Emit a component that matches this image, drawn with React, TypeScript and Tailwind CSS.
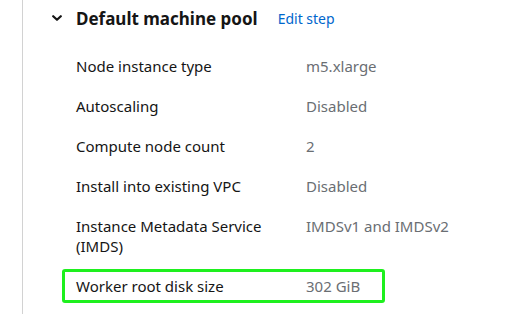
import React from 'react';

const rows: { label: string; value: string; highlight?: boolean }[] = [
  { label: 'Node instance type', value: 'm5.xlarge' },
  { label: 'Autoscaling', value: 'Disabled' },
  { label: 'Compute node count', value: '2' },
  { label: 'Install into existing VPC', value: 'Disabled' },
  { label: 'Instance Metadata Service (IMDS)', value: 'IMDSv1 and IMDSv2' },
  { label: 'Worker root disk size', value: '302 GiB', highlight: true },
];

const Chevron = () => (
  <svg width="10" height="7" viewBox="0 0 10 7" className="text-[#151515]">
    <path d="M1.2 1.2 L5 4.8 L8.8 1.2" fill="none" stroke="currentColor" strokeWidth="2.2" strokeLinecap="round" strokeLinejoin="round" />
  </svg>
);

export default function App() {
  return (
    <div className="w-[505px] h-[314px] overflow-hidden bg-white font-['Noto_Sans',sans-serif]">
      <div className="ml-[22px] h-full border-l border-[#d2d2d2] pl-[26px] pt-[8px]">
        {/* Section header */}
        <div className="flex items-center h-[21px]">
          <div className="w-[27px] pl-[3px] flex items-center">
            <Chevron />
          </div>
          <h3 className="text-[17px] font-bold leading-[21px] text-[#151515]">Default machine pool</h3>
          <a href="#" className="ml-[20px] text-[14px] leading-[21px] text-[#0066cc]">Edit step</a>
        </div>

        {/* Description list */}
        <dl className="mt-[27px] pl-[27px] flex flex-col gap-[20px] text-[15px] leading-[20px]">
          {rows.map((r) =>
            r.highlight ? (
              <div
                key={r.label}
                className="-mx-[14px] -my-[7px] px-[11px] py-[4px] w-[323px] border-[3px] border-[#1ef01e] rounded-[3px] flex"
              >
                <dt className="w-[230px] text-[#151515]">{r.label}</dt>
                <dd className="text-[#6a6e73]">{r.value}</dd>
              </div>
            ) : (
              <div key={r.label} className="flex">
                <dt className="w-[230px] pr-[20px] text-[#151515]">{r.label}</dt>
                <dd className="text-[#6a6e73]">{r.value}</dd>
              </div>
            )
          )}
        </dl>
      </div>
    </div>
  );
}
